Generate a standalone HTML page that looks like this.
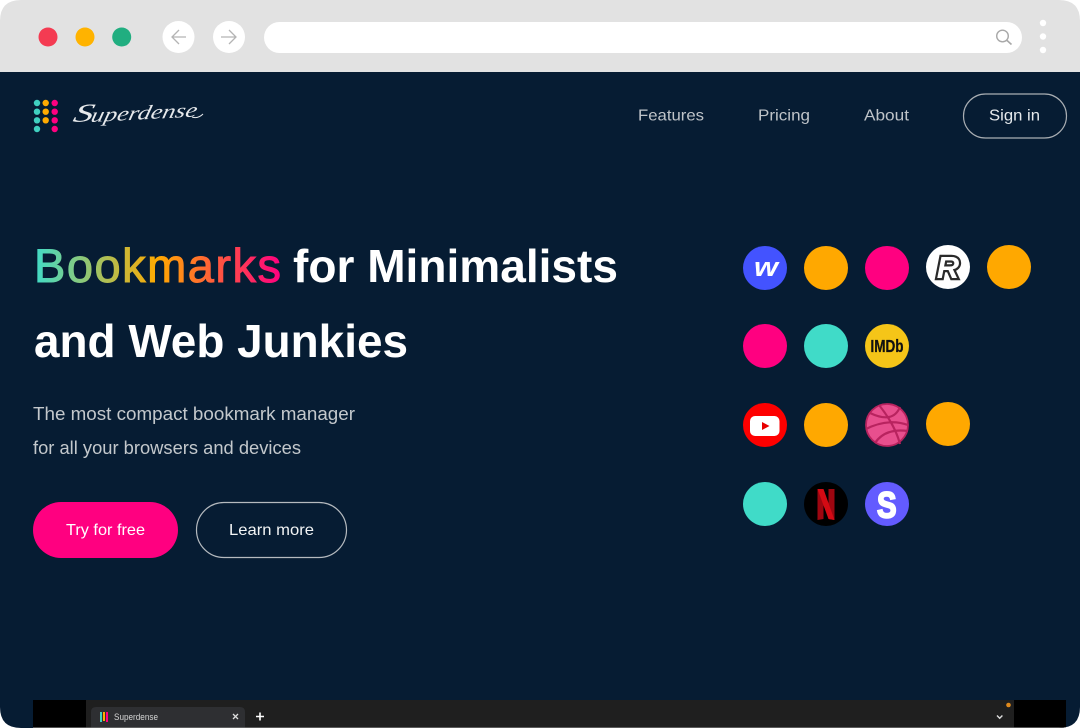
<!DOCTYPE html>
<html lang="en"><head><meta charset="utf-8"><title>Superdense</title>
<style>
html,body{margin:0;padding:0;background:#fff;width:1080px;height:728px;overflow:hidden}
svg{display:block}
text{font-family:"Liberation Sans",sans-serif}
</style></head><body>
<svg width="1080" height="728" viewBox="0 0 1080 728" xmlns="http://www.w3.org/2000/svg">
<defs>
<linearGradient id="g" gradientUnits="userSpaceOnUse" x1="34" y1="0" x2="281" y2="0">
<stop offset="0" stop-color="#40dbc8"/><stop offset=".5" stop-color="#ffaa00"/><stop offset="1" stop-color="#ff0080"/>
</linearGradient>
<clipPath id="frame"><path d="M0 21Q0 0 21 0H1059Q1080 0 1080 21V707Q1080 728 1059 728H21Q0 728 0 707Z"/></clipPath>
</defs>
<rect width="1080" height="728" fill="#fff"/>
<g clip-path="url(#frame)">
<rect width="1080" height="72" fill="#e2e2e2"/>
<rect y="72" width="1080" height="656" fill="#061c33"/>
<rect x="33" y="700" width="1033" height="28" fill="#000"/>
<rect x="86" y="700" width="928" height="28" fill="#1f1f1f"/>
<path d="M91 728V712Q91 707 96 707H240Q245 707 245 712V728Z" fill="#2e2f32"/>
<rect x="100" y="712" width="2" height="10" fill="#3fd0bd"/><rect x="103" y="712" width="2" height="9" fill="#ffaa00"/><rect x="106" y="712" width="2" height="10" fill="#ff0080"/>
<text x="114" y="720" font-size="9" fill="#d4d4d4" textLength="44" lengthAdjust="spacingAndGlyphs">Superdense</text>
<path d="M233 714l5 5M238 714l-5 5" stroke="#ddd" stroke-width="1.300"/>
<path d="M256 716.500h8M260 712.500v8" stroke="#fff" stroke-width="1.600"/>
<circle cx="1008.500" cy="705" r="2.300" fill="#e08a1c"/>
<path d="M997 715.500l2.700 2.700 2.700-2.700" fill="none" stroke="#ddd" stroke-width="1.400"/>
<rect x="33" y="727.300" width="1033" height=".7" fill="#777"/>
</g>

<circle cx="48" cy="37" r="9.500" fill="#f43b52"/>
<circle cx="85" cy="37" r="9.500" fill="#ffb300"/>
<circle cx="121.700" cy="37" r="9.500" fill="#21ae80"/>
<circle cx="178.500" cy="37" r="16" fill="#fff"/>
<circle cx="229" cy="37" r="16" fill="#fff"/>
<path d="M186 37H172M179 30l-7 7 7 7" fill="none" stroke="#b4b4b4" stroke-width="1.300"/>
<path d="M221 37H236M229 30l7 7-7 7" fill="none" stroke="#b4b4b4" stroke-width="1.300"/>
<rect x="264" y="22" width="758" height="31" rx="15.500" fill="#fff"/>
<circle cx="1002.500" cy="36" r="5.800" fill="none" stroke="#a8a8a8" stroke-width="1.400"/>
<path d="M1006.500 40l5 4.500" stroke="#a8a8a8" stroke-width="1.600"/>
<circle cx="1043" cy="23" r="3.200" fill="#fff"/><circle cx="1043" cy="36.500" r="3.200" fill="#fff"/><circle cx="1043" cy="50" r="3.200" fill="#fff"/>

<g fill="#40d0c0"><circle cx="37" cy="103" r="3.200"/><circle cx="37" cy="111.700" r="3.200"/><circle cx="37" cy="120.300" r="3.200"/><circle cx="37" cy="129" r="3.200"/></g>
<g fill="#ffaa00"><circle cx="45.700" cy="103" r="3.200"/><circle cx="45.700" cy="111.700" r="3.200"/><circle cx="45.700" cy="120.300" r="3.200"/></g>
<g fill="#ff0080"><circle cx="54.700" cy="103" r="3.200"/><circle cx="54.700" cy="111.700" r="3.200"/><circle cx="54.700" cy="120.300" r="3.200"/><circle cx="54.700" cy="129" r="3.200"/></g>
<g transform="rotate(-3 72 122)" fill="#e6e9ec">
<text transform="translate(72 122) skewX(-18)" font-size="25" style="font-family:'Liberation Serif',serif;font-style:italic" textLength="20" lengthAdjust="spacingAndGlyphs">S</text>
<text transform="translate(90 123) skewX(-16)" font-size="20" style="font-family:'Liberation Serif',serif;font-style:italic" textLength="106" lengthAdjust="spacingAndGlyphs">uperdense</text>
</g>
<path d="M192 117Q198 119 203 114" fill="none" stroke="#e6e9ec" stroke-width="1"/>

<g font-size="16" fill="#bfc4c9">
<text x="638" y="120.500" textLength="66" lengthAdjust="spacingAndGlyphs">Features</text>
<text x="758" y="120.500" textLength="52" lengthAdjust="spacingAndGlyphs">Pricing</text>
<text x="864" y="120.500" textLength="45" lengthAdjust="spacingAndGlyphs">About</text>
</g>
<rect x="963.500" y="94" width="103" height="44" rx="22" fill="none" stroke="#a9aeb3" stroke-width="1.200"/>
<text x="989" y="120.500" font-size="16" fill="#e6eaed" textLength="51" lengthAdjust="spacingAndGlyphs">Sign in</text>

<g font-size="46">
<text x="34" y="282" font-size="47" fill="url(#g)" stroke="url(#g)" stroke-width="1" textLength="247" lengthAdjust="spacing">Bookmarks</text>
<text x="293" y="282" fill="#fff" font-weight="700" textLength="325" lengthAdjust="spacingAndGlyphs">for Minimalists</text>
<text x="34" y="357" fill="#fff" font-weight="700" textLength="374" lengthAdjust="spacingAndGlyphs">and Web Junkies</text>
</g>

<g font-size="18" fill="#c3c8cc">
<text x="33" y="420" textLength="322" lengthAdjust="spacingAndGlyphs">The most compact bookmark manager</text>
<text x="33" y="454" textLength="268" lengthAdjust="spacingAndGlyphs">for all your browsers and devices</text>
</g>

<rect x="33" y="502" width="145" height="56" rx="28" fill="#ff0080"/>
<text x="66" y="535" font-size="16" fill="#fff" textLength="79" lengthAdjust="spacingAndGlyphs">Try for free</text>
<rect x="196.500" y="502.500" width="150" height="55" rx="27.500" fill="none" stroke="#b5babf" stroke-width="1.200"/>
<text x="229" y="535" font-size="16" fill="#f2f4f5" textLength="85" lengthAdjust="spacingAndGlyphs">Learn more</text>

<!-- row 1 -->
<circle cx="765" cy="268" r="22" fill="#4353ff"/>
<text x="754" y="276" font-size="27" font-weight="700" font-style="italic" fill="#fff" textLength="24" lengthAdjust="spacingAndGlyphs">w</text>
<circle cx="826" cy="268" r="22" fill="#ffa800"/>
<circle cx="887" cy="268" r="22" fill="#ff0080"/>
<circle cx="948" cy="267" r="22" fill="#fff"/>
<text x="948" y="278" font-size="31" font-weight="700" font-style="italic" fill="#fff" stroke="#2a2a2a" stroke-width="4.500" style="paint-order:stroke" text-anchor="middle">R</text>
<circle cx="1009" cy="267" r="22" fill="#ffa800"/>
<!-- row 2 -->
<circle cx="765" cy="346" r="22" fill="#ff0080"/>
<circle cx="826" cy="346" r="22" fill="#40dbc8"/>
<circle cx="887" cy="346" r="22" fill="#f5c518"/>
<text x="870.500" y="352" font-size="17.500" font-weight="700" fill="#111" stroke="#111" stroke-width=".3" textLength="33" lengthAdjust="spacingAndGlyphs">IMDb</text>
<!-- row 3 -->
<circle cx="765" cy="425" r="22" fill="#fe0000"/>
<rect x="750" y="416" width="29.500" height="20" rx="5" fill="#fff"/>
<path d="M762 422v8l7.500-4z" fill="#e80000"/>
<circle cx="826" cy="425" r="22" fill="#ffa800"/>
<circle cx="887" cy="425" r="21" fill="#e84f8e" stroke="#b8235f" stroke-width="1.800"/>
<g fill="none" stroke="#b8235f" stroke-width="2.200">
<path d="M870 413Q893 424 900 407"/>
<path d="M879 405Q895 425 900 444"/>
<path d="M866 429Q888 418 908 425"/>
<path d="M875 443Q885 428 908 431"/>
</g>
<circle cx="948" cy="424" r="22" fill="#ffa800"/>
<!-- row 4 -->
<circle cx="765" cy="504" r="22" fill="#40dbc8"/>
<circle cx="826" cy="504" r="22" fill="#000"/>
<path d="M817.500 489H823.500V519L817.500 520Z" fill="#9e0610"/>
<path d="M828.500 489H834.500V520L828.500 519Z" fill="#9e0610"/>
<path d="M817.500 489H823.500L834.500 520L828.500 519Z" fill="#d40a14"/>
<circle cx="887" cy="504" r="22" fill="#635bff"/>
<text x="877" y="517.500" font-size="36" font-weight="700" fill="#fff" stroke="#fff" stroke-width="2" textLength="19.500" lengthAdjust="spacingAndGlyphs">S</text>
</svg>
</body></html>
